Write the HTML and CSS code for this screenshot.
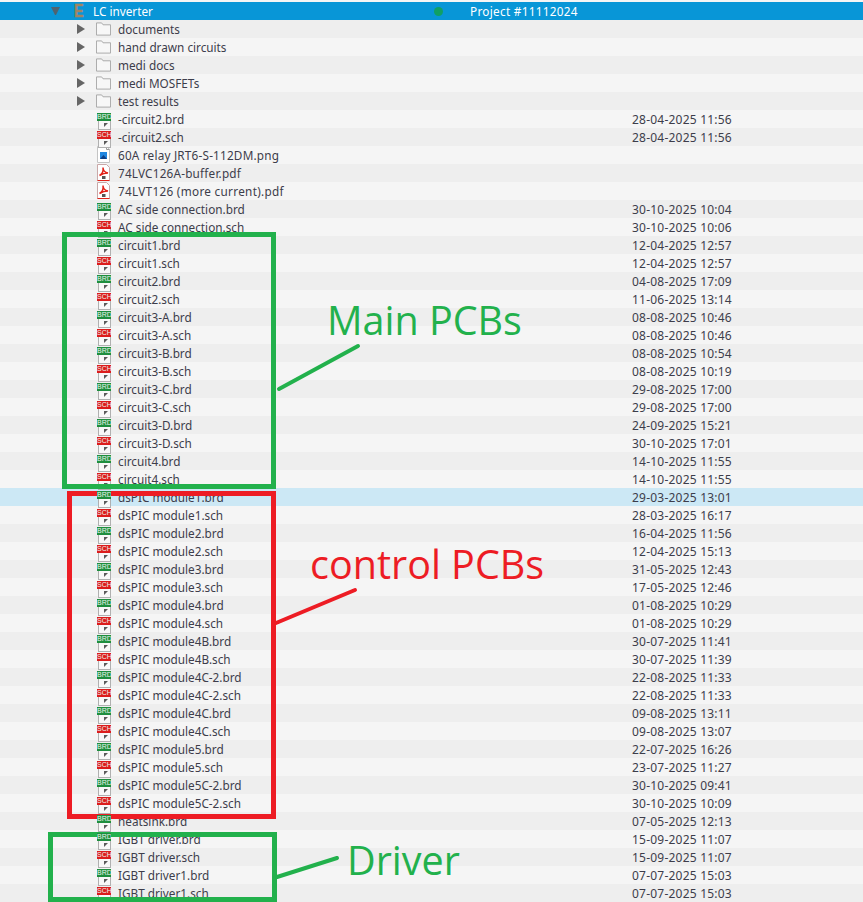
FILE: index.html
```html
<!DOCTYPE html>
<html lang="en">
  <head>
    <meta charset="UTF-8" />
    <title>LC inverter</title>
    <link rel="stylesheet" href="styles.css">
  </head>
  <body>
    <svg class="defs" width="0" height="0">
      <symbol id="png" viewBox="0 0 15 18">
        <path d="M1.500 .5h9l3 3v13h-12z" fill="#fff" stroke="#c4c4c4"/>
        <path d="M10.500 .5v3h3" fill="none" stroke="#9a9a9a"/>
        <rect x="4" y="6" width="7" height="7" fill="#1f86e0"/>
        <path d="M4 13l3.500-4 3.500 4z" fill="#0d3f86"/>
      </symbol>
      <symbol id="pdf" viewBox="0 0 15 18">
        <path d="M1.500 .5h9l3 3v13h-12z" fill="#fff" stroke="#c9a8a8"/>
        <path d="M3.500 11.500c3-1.500 4-4.500 3.500-8 0 3 2.500 5 5 5.500-3.500 0-6 1-8.500 2.500z" fill="none" stroke="#e2231a" stroke-width="1.500"/>
        <rect x="6" y="12" width="3.500" height="3" fill="#555"/>
        <path d="M1.500 16.500h12" stroke="#e2231a"/>
      </symbol>
      <symbol id="folder" viewBox="0 0 16 16">
        <path d="M.5 14.500v-13h5.500l1.500 2h8v11z" fill="#f7f7f7" stroke="#a6a6a6"/>
      </symbol>
    </svg>

    <div class="tree">
      <div class="row selected">
        <span class="twisty open"></span>
        <span class="eagle">E</span>
        <span class="name">LC inverter</span>
        <span class="dot"></span>
        <span class="project">Project #11112024</span>
      </div>
      <div class="row"><span class="twisty"></span><svg class="icon"><use href="#folder"/></svg><span class="name">documents</span></div>
      <div class="row"><span class="twisty"></span><svg class="icon"><use href="#folder"/></svg><span class="name">hand drawn circuits</span></div>
      <div class="row"><span class="twisty"></span><svg class="icon"><use href="#folder"/></svg><span class="name">medi docs</span></div>
      <div class="row"><span class="twisty"></span><svg class="icon"><use href="#folder"/></svg><span class="name">medi MOSFETs</span></div>
      <div class="row"><span class="twisty"></span><svg class="icon"><use href="#folder"/></svg><span class="name">test results</span></div>
      <div class="row"><span class="leaf"></span><span class="file brd"><b>BRD</b></span><span class="name">-circuit2.brd</span><span class="date">28-04-2025 11:56</span></div>
      <div class="row"><span class="leaf"></span><span class="file sch"><b>SCH</b></span><span class="name">-circuit2.sch</span><span class="date">28-04-2025 11:56</span></div>
      <div class="row"><span class="leaf"></span><svg class="icon"><use href="#png"/></svg><span class="name wide">60A relay JRT6-S-112DM.png</span></div>
      <div class="row"><span class="leaf"></span><svg class="icon"><use href="#pdf"/></svg><span class="name wide">74LVC126A-buffer.pdf</span></div>
      <div class="row"><span class="leaf"></span><svg class="icon"><use href="#pdf"/></svg><span class="name wider">74LVT126 (more current).pdf</span></div>
      <div class="row"><span class="leaf"></span><span class="file brd"><b>BRD</b></span><span class="name">AC side connection.brd</span><span class="date">30-10-2025 10:04</span></div>
      <div class="row"><span class="leaf"></span><span class="file sch"><b>SCH</b></span><span class="name">AC side connection.sch</span><span class="date">30-10-2025 10:06</span></div>
      <div class="row"><span class="leaf"></span><span class="file brd"><b>BRD</b></span><span class="name">circuit1.brd</span><span class="date">12-04-2025 12:57</span></div>
      <div class="row"><span class="leaf"></span><span class="file sch"><b>SCH</b></span><span class="name">circuit1.sch</span><span class="date">12-04-2025 12:57</span></div>
      <div class="row"><span class="leaf"></span><span class="file brd"><b>BRD</b></span><span class="name">circuit2.brd</span><span class="date">04-08-2025 17:09</span></div>
      <div class="row"><span class="leaf"></span><span class="file sch"><b>SCH</b></span><span class="name">circuit2.sch</span><span class="date">11-06-2025 13:14</span></div>
      <div class="row"><span class="leaf"></span><span class="file brd"><b>BRD</b></span><span class="name">circuit3-A.brd</span><span class="date">08-08-2025 10:46</span></div>
      <div class="row"><span class="leaf"></span><span class="file sch"><b>SCH</b></span><span class="name">circuit3-A.sch</span><span class="date">08-08-2025 10:46</span></div>
      <div class="row"><span class="leaf"></span><span class="file brd"><b>BRD</b></span><span class="name">circuit3-B.brd</span><span class="date">08-08-2025 10:54</span></div>
      <div class="row"><span class="leaf"></span><span class="file sch"><b>SCH</b></span><span class="name">circuit3-B.sch</span><span class="date">08-08-2025 10:19</span></div>
      <div class="row"><span class="leaf"></span><span class="file brd"><b>BRD</b></span><span class="name">circuit3-C.brd</span><span class="date">29-08-2025 17:00</span></div>
      <div class="row"><span class="leaf"></span><span class="file sch"><b>SCH</b></span><span class="name">circuit3-C.sch</span><span class="date">29-08-2025 17:00</span></div>
      <div class="row"><span class="leaf"></span><span class="file brd"><b>BRD</b></span><span class="name">circuit3-D.brd</span><span class="date">24-09-2025 15:21</span></div>
      <div class="row"><span class="leaf"></span><span class="file sch"><b>SCH</b></span><span class="name">circuit3-D.sch</span><span class="date">30-10-2025 17:01</span></div>
      <div class="row"><span class="leaf"></span><span class="file brd"><b>BRD</b></span><span class="name">circuit4.brd</span><span class="date">14-10-2025 11:55</span></div>
      <div class="row"><span class="leaf"></span><span class="file sch"><b>SCH</b></span><span class="name">circuit4.sch</span><span class="date">14-10-2025 11:55</span></div>
      <div class="row hover"><span class="leaf"></span><span class="file brd"><b>BRD</b></span><span class="name">dsPIC module1.brd</span><span class="date">29-03-2025 13:01</span></div>
      <div class="row"><span class="leaf"></span><span class="file sch"><b>SCH</b></span><span class="name">dsPIC module1.sch</span><span class="date">28-03-2025 16:17</span></div>
      <div class="row"><span class="leaf"></span><span class="file brd"><b>BRD</b></span><span class="name">dsPIC module2.brd</span><span class="date">16-04-2025 11:56</span></div>
      <div class="row"><span class="leaf"></span><span class="file sch"><b>SCH</b></span><span class="name">dsPIC module2.sch</span><span class="date">12-04-2025 15:13</span></div>
      <div class="row"><span class="leaf"></span><span class="file brd"><b>BRD</b></span><span class="name">dsPIC module3.brd</span><span class="date">31-05-2025 12:43</span></div>
      <div class="row"><span class="leaf"></span><span class="file sch"><b>SCH</b></span><span class="name">dsPIC module3.sch</span><span class="date">17-05-2025 12:46</span></div>
      <div class="row"><span class="leaf"></span><span class="file brd"><b>BRD</b></span><span class="name">dsPIC module4.brd</span><span class="date">01-08-2025 10:29</span></div>
      <div class="row"><span class="leaf"></span><span class="file sch"><b>SCH</b></span><span class="name">dsPIC module4.sch</span><span class="date">01-08-2025 10:29</span></div>
      <div class="row"><span class="leaf"></span><span class="file brd"><b>BRD</b></span><span class="name">dsPIC module4B.brd</span><span class="date">30-07-2025 11:41</span></div>
      <div class="row"><span class="leaf"></span><span class="file sch"><b>SCH</b></span><span class="name">dsPIC module4B.sch</span><span class="date">30-07-2025 11:39</span></div>
      <div class="row"><span class="leaf"></span><span class="file brd"><b>BRD</b></span><span class="name">dsPIC module4C-2.brd</span><span class="date">22-08-2025 11:33</span></div>
      <div class="row"><span class="leaf"></span><span class="file sch"><b>SCH</b></span><span class="name">dsPIC module4C-2.sch</span><span class="date">22-08-2025 11:33</span></div>
      <div class="row"><span class="leaf"></span><span class="file brd"><b>BRD</b></span><span class="name">dsPIC module4C.brd</span><span class="date">09-08-2025 13:11</span></div>
      <div class="row"><span class="leaf"></span><span class="file sch"><b>SCH</b></span><span class="name">dsPIC module4C.sch</span><span class="date">09-08-2025 13:07</span></div>
      <div class="row"><span class="leaf"></span><span class="file brd"><b>BRD</b></span><span class="name">dsPIC module5.brd</span><span class="date">22-07-2025 16:26</span></div>
      <div class="row"><span class="leaf"></span><span class="file sch"><b>SCH</b></span><span class="name">dsPIC module5.sch</span><span class="date">23-07-2025 11:27</span></div>
      <div class="row"><span class="leaf"></span><span class="file brd"><b>BRD</b></span><span class="name">dsPIC module5C-2.brd</span><span class="date">30-10-2025 09:41</span></div>
      <div class="row"><span class="leaf"></span><span class="file sch"><b>SCH</b></span><span class="name">dsPIC module5C-2.sch</span><span class="date">30-10-2025 10:09</span></div>
      <div class="row"><span class="leaf"></span><span class="file brd"><b>BRD</b></span><span class="name">heatsink.brd</span><span class="date">07-05-2025 12:13</span></div>
      <div class="row"><span class="leaf"></span><span class="file brd"><b>BRD</b></span><span class="name">IGBT driver.brd</span><span class="date">15-09-2025 11:07</span></div>
      <div class="row"><span class="leaf"></span><span class="file sch"><b>SCH</b></span><span class="name">IGBT driver.sch</span><span class="date">15-09-2025 11:07</span></div>
      <div class="row"><span class="leaf"></span><span class="file brd"><b>BRD</b></span><span class="name">IGBT driver1.brd</span><span class="date">07-07-2025 15:03</span></div>
      <div class="row"><span class="leaf"></span><span class="file sch"><b>SCH</b></span><span class="name">IGBT driver1.sch</span><span class="date">07-07-2025 15:03</span></div>
    </div>

    <!-- hand drawn notes on top of the list -->
    <div class="box box-main"></div>
    <div class="box box-control"></div>
    <div class="box box-driver"></div>
    <svg class="strokes" width="863" height="902">
      <line x1="279" y1="389" x2="358" y2="346" class="green"/>
      <line x1="276" y1="623" x2="355" y2="590" class="red"/>
      <line x1="277" y1="877" x2="337" y2="858" class="green"/>
    </svg>
    <div class="note note-main">Main PCBs</div>
    <div class="note note-control">control PCBs</div>
    <div class="note note-driver">Driver</div>
  </body>
</html>
```

FILE: styles.css
```css
* {
  margin: 0;
  padding: 0;
  box-sizing: border-box;
}

html,
body {
  height: 902px;
  overflow: hidden;
}

body {
  position: relative;
  background-color: #f5f5f5;
  font-family: "Noto Sans", sans-serif;
  font-size: 11.75px;
  color: #3d3d4b;
}

.defs {
  position: absolute;
}

.tree {
  padding-top: 2px;
}

.row {
  height: 18px;
  display: flex;
  align-items: center;
  background-color: #f5f5f5;
  padding-left: 77px;
  white-space: nowrap;
}
.row:nth-child(even) {
  background-color: #eeeeee;
}
.row.selected {
  background-color: #0896d7;
  color: #ffffff;
  padding-left: 51px;
}
.row.hover {
  background-color: #cce8f5;
}

.twisty {
  flex: none;
  width: 8px;
  height: 10px;
  margin-right: 11px;
  border-left: 8px solid #666666;
  border-top: 5px solid transparent;
  border-bottom: 5px solid transparent;
}
.twisty.open {
  width: 9px;
  height: 8px;
  margin-right: 14px;
  border-top: 8px solid #4f6370;
  border-left: 4.500px solid transparent;
  border-right: 4.500px solid transparent;
  border-bottom: 0;
}
.leaf {
  flex: none;
  width: 19px;
}

.icon {
  width: 15px;
  height: 18px;
  margin-right: 7px;
  flex: none;
}

.file {
  flex: none;
  position: relative;
  display: block;
  width: 15px;
  height: 18px;
  margin-right: 7px;
  padding: 3px 0 0 1px;
}
/* the sheet behind the coloured label */
.file::before {
  content: "";
  position: absolute;
  left: 2px;
  top: 3px;
  width: 11px;
  height: 15px;
  background-color: #f8f8f8;
  border: 1px solid #b0b0b0;
}
/* folded corner */
.file::after {
  content: "";
  position: absolute;
  left: 8px;
  top: 13px;
  border-top: 4px solid #5a5a5a;
  border-right: 4px solid transparent;
}
.file b {
  position: relative;
  z-index: 1;
  display: block;
  width: 14px;
  height: 8px;
  font-family: "Liberation Sans", sans-serif;
  font-size: 7px;
  font-weight: 400;
  line-height: 8px;
  text-align: center;
  color: #eaf5ec;
  overflow: hidden;
}
.brd b {
  background-color: #1e8e3e;
}
.sch b {
  background-color: #dc1c1c;
}

.eagle {
  flex: none;
  width: 12px;
  margin-right: 7px;
  font-family: "Liberation Sans", sans-serif;
  font-size: 18px;
  font-weight: 700;
  line-height: 18px;
  color: #a08562;
  -webkit-text-stroke: 0.5px #a08562;
  transform: scaleX(0.8);
  transform-origin: left center;
}

.name {
  flex: none;
  width: 514px;
}
.name.wide {
  letter-spacing: 0.2px;
}
.name.wider {
  letter-spacing: 0.3px;
}
.selected .name {
  width: 341px;
}
.date {
  font-size: 12px;
  letter-spacing: 0.22px;
}
.project {
  letter-spacing: 0.3px;
}

.dot {
  flex: none;
  width: 9px;
  height: 9px;
  border-radius: 50%;
  background-color: #10a065;
  margin-right: 27px;
}

.box {
  position: absolute;
  border-style: solid;
  border-width: 5px;
}
.box-main {
  left: 62px;
  top: 232px;
  width: 214px;
  height: 257px;
  border-color: #22b14c;
}
.box-control {
  left: 67px;
  top: 491px;
  width: 209px;
  height: 328px;
  border-color: #ed1c24;
}
.box-driver {
  left: 48px;
  top: 832px;
  width: 229px;
  height: 70px;
  border-color: #22b14c;
}

.strokes {
  position: absolute;
  left: 0;
  top: 0;
}
.strokes line {
  stroke-width: 4;
  stroke-linecap: round;
}
.green {
  stroke: #22b14c;
}
.red {
  stroke: #ed1c24;
}

.note {
  position: absolute;
  font-family: "Open Sans", sans-serif;
  font-size: 39.5px;
  line-height: 50px;
  white-space: nowrap;
}
.note-main {
  left: 327px;
  top: 295px;
  color: #22b14c;
}
.note-control {
  left: 310px;
  top: 539px;
  color: #ed1c24;
}
.note-driver {
  left: 347px;
  top: 835px;
  color: #22b14c;
}
```
